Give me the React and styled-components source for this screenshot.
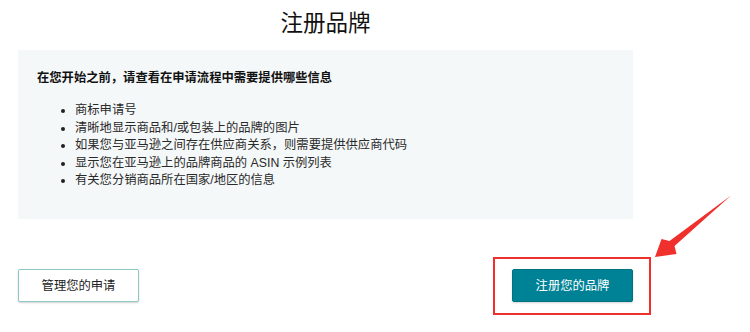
import React from 'react';
import styled, { createGlobalStyle } from 'styled-components';

const GlobalStyle = createGlobalStyle`
  body {
    margin: 0;
    background: #ffffff;
    font-family: "Liberation Sans", "Noto Sans CJK SC", sans-serif;
    color: #111;
  }
`;

const Page = styled.div`
  position: relative;
  width: 750px;
  height: 332px;
  overflow: hidden;
`;

const Content = styled.div`
  width: 615px;
  margin-left: 18px;
`;

const Title = styled.h1`
  margin: 0;
  height: 50px;
  line-height: 48px;
  text-align: center;
  font-size: 22.5px;
  font-weight: 400;
  color: #111;
`;

const InfoPanel = styled.div`
  background: #f5f8f9;
  padding: 20px 19px 29px;
`;

const Heading = styled.div`
  font-size: 12.3px;
  line-height: 17px;
  font-weight: 700;
  color: #111;
`;

const List = styled.ul`
  list-style: none;
  margin: 15px 0 0;
  padding: 0 0 0 38px;
`;

const Item = styled.li`
  position: relative;
  font-size: 12.3px;
  line-height: 17.5px;
  color: #2a2a2a;

  &::before {
    content: '';
    position: absolute;
    left: -14px;
    top: 7px;
    width: 4px;
    height: 4px;
    border-radius: 50%;
    background: #222;
  }
`;

const ButtonRow = styled.div`
  display: flex;
  justify-content: space-between;
  margin-top: 50px;
`;

const Button = styled.button`
  width: 121px;
  height: 33px;
  padding: 0;
  font-family: inherit;
  font-size: 12.3px;
  border-radius: 2px;
  cursor: pointer;
  color: ${(p) => (p.$primary ? '#ffffff' : '#222')};
  background: ${(p) => (p.$primary ? '#008296' : '#ffffff')};
  border: 1px solid ${(p) => (p.$primary ? '#007381' : '#8dc8c5')};
  box-shadow: 0 1px 2px rgba(0, 0, 0, 0.18);
`;

const Highlight = styled.div`
  position: relative;
`;

const RedBox = styled.div`
  position: absolute;
  left: -19px;
  top: -12px;
  right: -18px;
  bottom: -13px;
  border: 2px solid #f0302c;
  pointer-events: none;
`;

const Arrow = styled.svg`
  position: absolute;
  left: 640px;
  top: 190px;
`;

const items = [
  '商标申请号',
  '清晰地显示商品和/或包装上的品牌的图片',
  '如果您与亚马逊之间存在供应商关系，则需要提供供应商代码',
  '显示您在亚马逊上的品牌商品的 ASIN 示例列表',
  '有关您分销商品所在国家/地区的信息',
];

const App = () => {
  return (
    <Page>
      <GlobalStyle />
      <Content>
        <Title>注册品牌</Title>
        <InfoPanel>
          <Heading>在您开始之前，请查看在申请流程中需要提供哪些信息</Heading>
          <List>
            {items.map((text) => (
              <Item key={text}>{text}</Item>
            ))}
          </List>
        </InfoPanel>
        <ButtonRow>
          <Button type="button">管理您的申请</Button>
          <Highlight>
            <Button type="button" $primary>
              注册您的品牌
            </Button>
            <RedBox />
          </Highlight>
        </ButtonRow>
      </Content>
      <Arrow width="110" height="75" viewBox="0 0 110 75">
        <polygon
          points="15,67 21.5,49 29.5,51 91,5.5 34.5,56 36.5,64"
          fill="#f0302c"
        />
      </Arrow>
    </Page>
  );
};

export default App;
